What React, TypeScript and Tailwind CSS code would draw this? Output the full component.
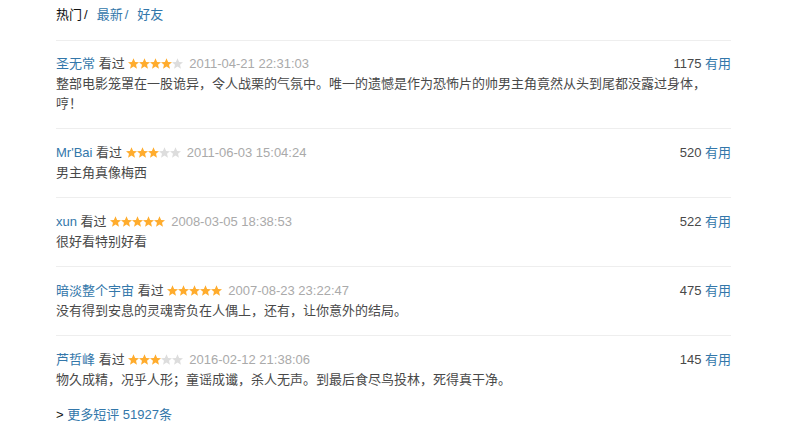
import React from "react";

const font = { fontFamily: '"Liberation Sans", "Noto Sans CJK SC", sans-serif' };

function Star({ on }: { on: boolean }) {
  return (
    <svg width="11" height="11" viewBox="1.3 1.5 21.4 20.5" className="inline-block">
      <path
        d="M12 1.5l3.1 7.1 7.6.7-5.8 5 1.8 7.5L12 17.8l-6.7 4 1.8-7.5-5.8-5 7.6-.7z"
        fill={on ? "#ffac2d" : "#dddddd"}
      />
    </svg>
  );
}

function Stars({ n }: { n: number }) {
  return (
    <span className="inline-flex items-center align-[-1px] w-[55px]">
      {[0, 1, 2, 3, 4].map((i) => (
        <Star key={i} on={i < n} />
      ))}
    </span>
  );
}

type R = { name: string; stars: number; date: string; useful: string; text: string };

const reviews: R[] = [
  {
    name: "圣无常",
    stars: 4,
    date: "2011-04-21 22:31:03",
    useful: "1175",
    text: "整部电影笼罩在一股诡异，令人战栗的气氛中。唯一的遗憾是作为恐怖片的帅男主角竟然从头到尾都没露过身体，哼！",
  },
  { name: "Mr'Bai", stars: 3, date: "2011-06-03 15:04:24", useful: "520", text: "男主角真像梅西" },
  { name: "xun", stars: 5, date: "2008-03-05 18:38:53", useful: "522", text: "很好看特别好看" },
  {
    name: "暗淡整个宇宙",
    stars: 5,
    date: "2007-08-23 23:22:47",
    useful: "475",
    text: "没有得到安息的灵魂寄负在人偶上，还有，让你意外的结局。",
  },
  {
    name: "芦哲峰",
    stars: 3,
    date: "2016-02-12 21:38:06",
    useful: "145",
    text: "物久成精，况乎人形；童谣成谶，杀人无声。到最后食尽鸟投林，死得真干净。",
  },
];

export default function App() {
  return (
    <div className="w-[792px] h-[435px] bg-white overflow-hidden text-[13px]" style={font}>
      <div className="ml-[56px] w-[675px]">
        <div className="pt-[5px] pb-[15px] leading-[20px] border-b border-[#eeeeee] text-[#111]">
          <span>热门</span>
          <span className="ml-[2px]">/</span>
          <span className="ml-[9px] text-[#3377aa]">最新</span>
          <span className="ml-[2px] text-[#3377aa]">/</span>
          <span className="ml-[9px] text-[#3377aa]">好友</span>
        </div>
        {reviews.map((r, i) => (
          <div
            key={i}
            className={
              (i === 0 ? "pt-[13px] " : "pt-[14px] ") +
              (i === reviews.length - 1 ? "pb-[14px]" : "pb-[14px] border-b border-[#eeeeee]")
            }
          >
            <div className="flex justify-between leading-[20px]">
              <div className="whitespace-nowrap">
                <span className="text-[#3377aa]">{r.name}</span>
                <span className="text-[#494949]"> 看过 </span>
                <Stars n={r.stars} />
                <span className="ml-[6px] text-[#aaaaaa]">{r.date}</span>
              </div>
              <div className="whitespace-nowrap">
                <span className="text-[#494949]">{r.useful}</span>
                <span className="text-[#3377aa]"> 有用</span>
              </div>
            </div>
            <p className="leading-[20px] text-[#494949]">{r.text}</p>
          </div>
        ))}
        <div className="leading-[20px] pt-[1px]">
          <span className="text-[#111]">&gt; </span>
          <span className="text-[#3377aa]">更多短评 51927条</span>
        </div>
      </div>
    </div>
  );
}
